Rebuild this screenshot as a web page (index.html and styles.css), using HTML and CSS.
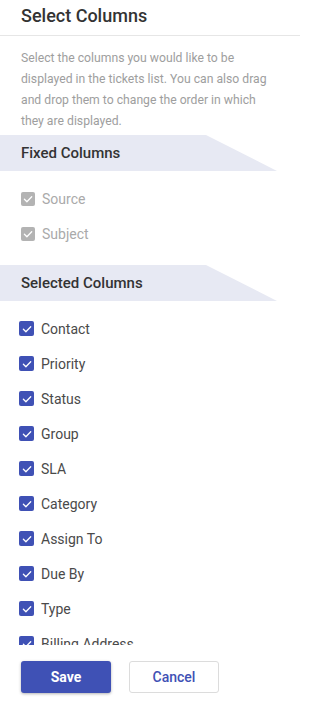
FILE: index.html
```html
<!DOCTYPE html>
<html>
<head>
<meta charset="utf-8">
<link rel="stylesheet" href="styles.css">
</head>
<body>
<div class="panel">
  <div class="header"><h1 class="title">Select Columns</h1></div>
  <p class="desc">Select the columns you would like to be displayed in the tickets list. You can also drag and drop them to change the order in which they are displayed.</p>
  <div class="banner">Fixed Columns</div>
  <ul class="list fixed">
    <li class="item"><span class="box"><svg viewBox="0 0 14 14"><path d="M3.4 7.3 L5.9 9.7 L10.7 4.8"/></svg></span><span class="label">Source</span></li>
    <li class="item"><span class="box"><svg viewBox="0 0 14 14"><path d="M3.4 7.3 L5.9 9.7 L10.7 4.8"/></svg></span><span class="label">Subject</span></li>
  </ul>
  <div class="banner">Selected Columns</div>
  <div class="scroll">
    <ul class="list selected">
      <li class="item"><span class="box"><svg viewBox="0 0 14 14"><path d="M3.4 7.3 L5.9 9.7 L10.7 4.8"/></svg></span><span class="label">Contact</span></li>
      <li class="item"><span class="box"><svg viewBox="0 0 14 14"><path d="M3.4 7.3 L5.9 9.7 L10.7 4.8"/></svg></span><span class="label">Priority</span></li>
      <li class="item"><span class="box"><svg viewBox="0 0 14 14"><path d="M3.4 7.3 L5.9 9.7 L10.7 4.8"/></svg></span><span class="label">Status</span></li>
      <li class="item"><span class="box"><svg viewBox="0 0 14 14"><path d="M3.4 7.3 L5.9 9.7 L10.7 4.8"/></svg></span><span class="label">Group</span></li>
      <li class="item"><span class="box"><svg viewBox="0 0 14 14"><path d="M3.4 7.3 L5.9 9.7 L10.7 4.8"/></svg></span><span class="label">SLA</span></li>
      <li class="item"><span class="box"><svg viewBox="0 0 14 14"><path d="M3.4 7.3 L5.9 9.7 L10.7 4.8"/></svg></span><span class="label">Category</span></li>
      <li class="item"><span class="box"><svg viewBox="0 0 14 14"><path d="M3.4 7.3 L5.9 9.7 L10.7 4.8"/></svg></span><span class="label">Assign To</span></li>
      <li class="item"><span class="box"><svg viewBox="0 0 14 14"><path d="M3.4 7.3 L5.9 9.7 L10.7 4.8"/></svg></span><span class="label">Due By</span></li>
      <li class="item"><span class="box"><svg viewBox="0 0 14 14"><path d="M3.4 7.3 L5.9 9.7 L10.7 4.8"/></svg></span><span class="label">Type</span></li>
      <li class="item"><span class="box"><svg viewBox="0 0 14 14"><path d="M3.4 7.3 L5.9 9.7 L10.7 4.8"/></svg></span><span class="label">Billing Address</span></li>
      <li class="item"><span class="box"><svg viewBox="0 0 14 14"><path d="M3.4 7.3 L5.9 9.7 L10.7 4.8"/></svg></span><span class="label">Shipping Address</span></li>
    </ul>
  </div>
  <div class="footer">
    <button class="btn primary">Save</button>
    <button class="btn secondary">Cancel</button>
  </div>
</div>
</body>
</html>
```
FILE: styles.css
```css
* { box-sizing: border-box; }
html, body { margin: 0; padding: 0; background: #fff; }
body { font-family: Roboto, "Liberation Sans", sans-serif; color: #333; }
.panel { height: 100vh; width: 300px; display: flex; flex-direction: column; }
.header { height: 36px; padding: 4px 21px 0; border-bottom: 1px solid #e6e6e6; flex: none; }
.title { margin: 0; font-size: 18px; line-height: 24px; font-weight: 500; color: #333; }
.desc { margin: 0 0 3px; padding: 12px 24px 0 21px; font-size: 12.2px; line-height: 21px; color: #9e9e9e; flex: none; }
.banner { flex: none; width: 277px; height: 36px; line-height: 36px; padding-left: 21px; background: #e7e9f3; font-size: 15px; font-weight: 500; color: #333; clip-path: polygon(0 0, 206px 0, 100% 100%, 0 100%); }
.list { list-style: none; margin: 0; padding: 10px 0 0; }
.fixed { padding-bottom: 14px; flex: none; }
.item { height: 35px; display: flex; align-items: center; font-size: 14px; }
.fixed .item { padding-left: 21px; color: #aaa; gap: 7px; }
.selected .item { padding-left: 19px; color: #4a4a4a; gap: 7px; }
.box { width: 14px; height: 14px; border-radius: 2px; display: flex; align-items: center; justify-content: center; flex: none; }
.fixed .box { background: #b3b3b3; }
.selected .box { background: #3f51b5; width: 15px; height: 15px; }
.box svg { width: 14px; height: 14px; fill: none; stroke: #fff; stroke-width: 1.3; stroke-linecap: round; stroke-linejoin: round; }
.scroll { flex: 1; overflow: hidden; min-height: 0; }
.footer { flex: none; height: 62px; padding: 16px 21px 0; display: flex; gap: 18px; }
.btn { width: 90px; height: 32px; padding: 0; border-radius: 3px; font-family: Roboto, "Liberation Sans", sans-serif; font-size: 14px; line-height: 30px; cursor: pointer; }
.primary { background: #3f51b5; color: #fff; border: none; font-weight: 700; box-shadow: 0 1px 3px rgba(0,0,0,0.3); }
.secondary { background: #fff; color: #3f51b5; border: 1px solid #dcdcdc; font-weight: 500; }
```
